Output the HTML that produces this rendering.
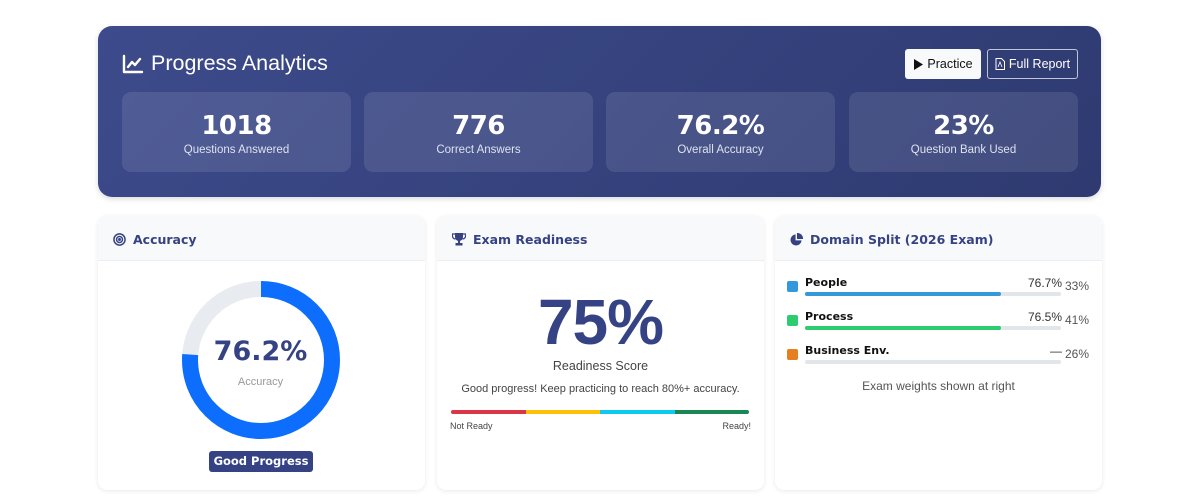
<!DOCTYPE html>
<html><head><meta charset="utf-8"><style>
*{box-sizing:border-box;margin:0;padding:0}
body{width:1200px;height:499px;background:#fff;font-family:"Liberation Sans",sans-serif;position:relative;overflow:hidden}
.hero{position:absolute;left:98px;top:26px;width:1003px;height:171px;border-radius:14px;background:linear-gradient(135deg,#3d4b8c,#2e3a70);box-shadow:0 2px 6px rgba(0,0,0,.15)}
.title{position:absolute;left:24px;top:25px;color:#fff;font-size:21.5px;display:flex;align-items:center;gap:7px}
.btn{position:absolute;top:23px;height:30px;border-radius:3px;font-size:12.5px;display:flex;align-items:center;justify-content:center;gap:4px}
.b1{left:807px;width:76px;background:#f8f9fa;color:#111}
.b2{left:889px;width:91px;border:1px solid rgba(255,255,255,.7);color:#fff}
.stat{position:absolute;top:66px;width:229px;height:80px;border-radius:9px;background:rgba(255,255,255,.1);color:#fff;text-align:center}
.stat b{display:block;font-size:26px;margin-top:19px;font-family:"DejaVu Sans",sans-serif;font-weight:bold;letter-spacing:-0.5px}
.stat span{display:block;font-size:11.5px;color:#dde2f0;margin-top:3px}
.card{position:absolute;top:216px;height:274px;width:327px;border-radius:9px;background:#fff;box-shadow:0 1px 5px rgba(0,0,0,.09);overflow:hidden}
.ch{height:45px;padding-top:2px;background:#f8f9fa;border-bottom:1px solid #eceef0;display:flex;align-items:center;gap:7px;padding-left:15px;color:#354385;font-weight:bold;font-size:12.5px;font-family:"DejaVu Sans",sans-serif}
.dom{position:absolute;left:12px;width:302px;height:30px}
.sq{position:absolute;left:0;top:5px;width:11px;height:11px;border-radius:2px}
.dn{position:absolute;left:18px;top:0;font-size:11px;font-weight:bold;font-family:"DejaVu Sans",sans-serif;color:#111}
.dp{position:absolute;right:27px;top:0;font-size:12px;color:#333}
.dw{position:absolute;right:0;top:3px;font-size:12px;color:#555}
.tr{position:absolute;left:18px;top:16px;width:256px;height:4px;border-radius:2px;background:#e2e5e9}
.tr i{display:block;height:4px;border-radius:2px}
</style></head><body>
<div class="hero">
 <div class="title"><svg width="22" height="20" viewBox="0 0 22 20" fill="none" stroke="#fff" stroke-width="2.4" stroke-linecap="round" stroke-linejoin="round"><path d="M2 2v16h18"/><path d="M6 13l4-5 3 3 5-6"/></svg>Progress Analytics</div>
 <div class="btn b1"><svg width="10" height="11"><path d="M1 0l9 5.5L1 11z" fill="#111"/></svg>Practice</div>
 <div class="btn b2"><svg width="10" height="12" viewBox="0 0 10 12"><path d="M1 .5h5.5L9.5 3.5v8H1z" fill="none" stroke="#fff"/><path d="M3 9l2-5 2 5" stroke="#fff" fill="none" stroke-width=".8"/></svg>Full Report</div>
 <div class="stat" style="left:24px"><b>1018</b><span>Questions Answered</span></div>
 <div class="stat" style="left:266px"><b>776</b><span>Correct Answers</span></div>
 <div class="stat" style="left:508px"><b>76.2%</b><span>Overall Accuracy</span></div>
 <div class="stat" style="left:751px"><b>23%</b><span>Question Bank Used</span></div>
</div>

<div class="card" style="left:98px">
 <div class="ch"><svg width="13" height="13" viewBox="0 0 14 14" fill="none" stroke="#354385" stroke-width="1.6"><circle cx="7" cy="7" r="6"/><circle cx="7" cy="7" r="3.2"/><circle cx="7" cy="7" r=".8" fill="#354385"/></svg>Accuracy</div>
 <svg style="position:absolute;left:83px;top:64px" width="160" height="160" viewBox="0 0 160 160">
  <circle cx="80" cy="80" r="71" fill="none" stroke="#e8ebef" stroke-width="16"/>
  <circle cx="80" cy="80" r="71" fill="none" stroke="#0d6efd" stroke-width="16" stroke-dasharray="339.9 446.1" transform="rotate(-90 80 80)"/>
 </svg>
 <div style="position:absolute;left:0;width:325px;top:120px;text-align:center;font-family:'DejaVu Sans',sans-serif;font-weight:bold;font-size:27px;color:#354385">76.2%</div>
 <div style="position:absolute;left:0;width:325px;top:160px;text-align:center;font-size:11px;color:#999">Accuracy</div>
 <div style="position:absolute;left:111px;top:235px;width:104px;height:21px;background:#354385;border-radius:3px;color:#fff;font-weight:bold;font-family:'DejaVu Sans',sans-serif;font-size:11.5px;text-align:center;line-height:21px">Good Progress</div>
</div>

<div class="card" style="left:437px">
 <div class="ch"><svg width="14" height="13" viewBox="0 0 14 13" fill="#354385"><path d="M3 0h8v4a4 4 0 0 1-8 0z"/><path d="M3 1H0.5v1.5A3 3 0 0 0 3.5 6M11 1h2.5v1.5A3 3 0 0 1 10.5 6" fill="none" stroke="#354385" stroke-width="1.2"/><rect x="6" y="7" width="2" height="3"/><rect x="3.5" y="10" width="7" height="2.5"/></svg>Exam Readiness</div>
 <div style="position:absolute;left:0;width:327px;top:69px;text-align:center;font-size:64px;font-weight:bold;color:#354385;letter-spacing:-1px">75%</div>
 <div style="position:absolute;left:0;width:327px;top:143px;text-align:center;font-size:12.5px;color:#444">Readiness Score</div>
 <div style="position:absolute;left:0;width:327px;top:167px;text-align:center;font-size:11px;color:#444">Good progress! Keep practicing to reach 80%+ accuracy.</div>
 <div style="position:absolute;left:14px;top:194px;width:298px;height:4px;border-radius:2px;display:flex;overflow:hidden"><i style="flex:1;background:#dc3545"></i><i style="flex:1;background:#ffc107"></i><i style="flex:1;background:#0dcaf0"></i><i style="flex:1;background:#198754"></i></div>
 <div style="position:absolute;left:13px;top:205px;font-size:9px;color:#444">Not Ready</div>
 <div style="position:absolute;right:13px;top:205px;font-size:9px;color:#444">Ready!</div>
</div>

<div class="card" style="left:775px">
 <div class="ch"><svg width="13" height="13" viewBox="0 0 14 14" fill="#354385"><path d="M6 1.5A6 6 0 1 0 12.5 8H6z"/><path d="M7.5 0A6 6 0 0 1 14 6.5H7.5z"/></svg>Domain Split (2026 Exam)</div>
 <div class="dom" style="top:60px"><div class="sq" style="background:#3498db"></div><div class="dn">People</div><div class="dp">76.7%</div><div class="dw">33%</div><div class="tr"><i style="width:76.7%;background:#3498db"></i></div></div>
 <div class="dom" style="top:94px"><div class="sq" style="background:#2ecc71"></div><div class="dn">Process</div><div class="dp">76.5%</div><div class="dw">41%</div><div class="tr"><i style="width:76.5%;background:#2ecc71"></i></div></div>
 <div class="dom" style="top:128px"><div class="sq" style="background:#e67e22"></div><div class="dn">Business Env.</div><div class="dp">—</div><div class="dw">26%</div><div class="tr"></div></div>
 <div style="position:absolute;left:0;width:327px;top:163px;text-align:center;font-size:12px;color:#555">Exam weights shown at right</div>
</div>
</body></html>
